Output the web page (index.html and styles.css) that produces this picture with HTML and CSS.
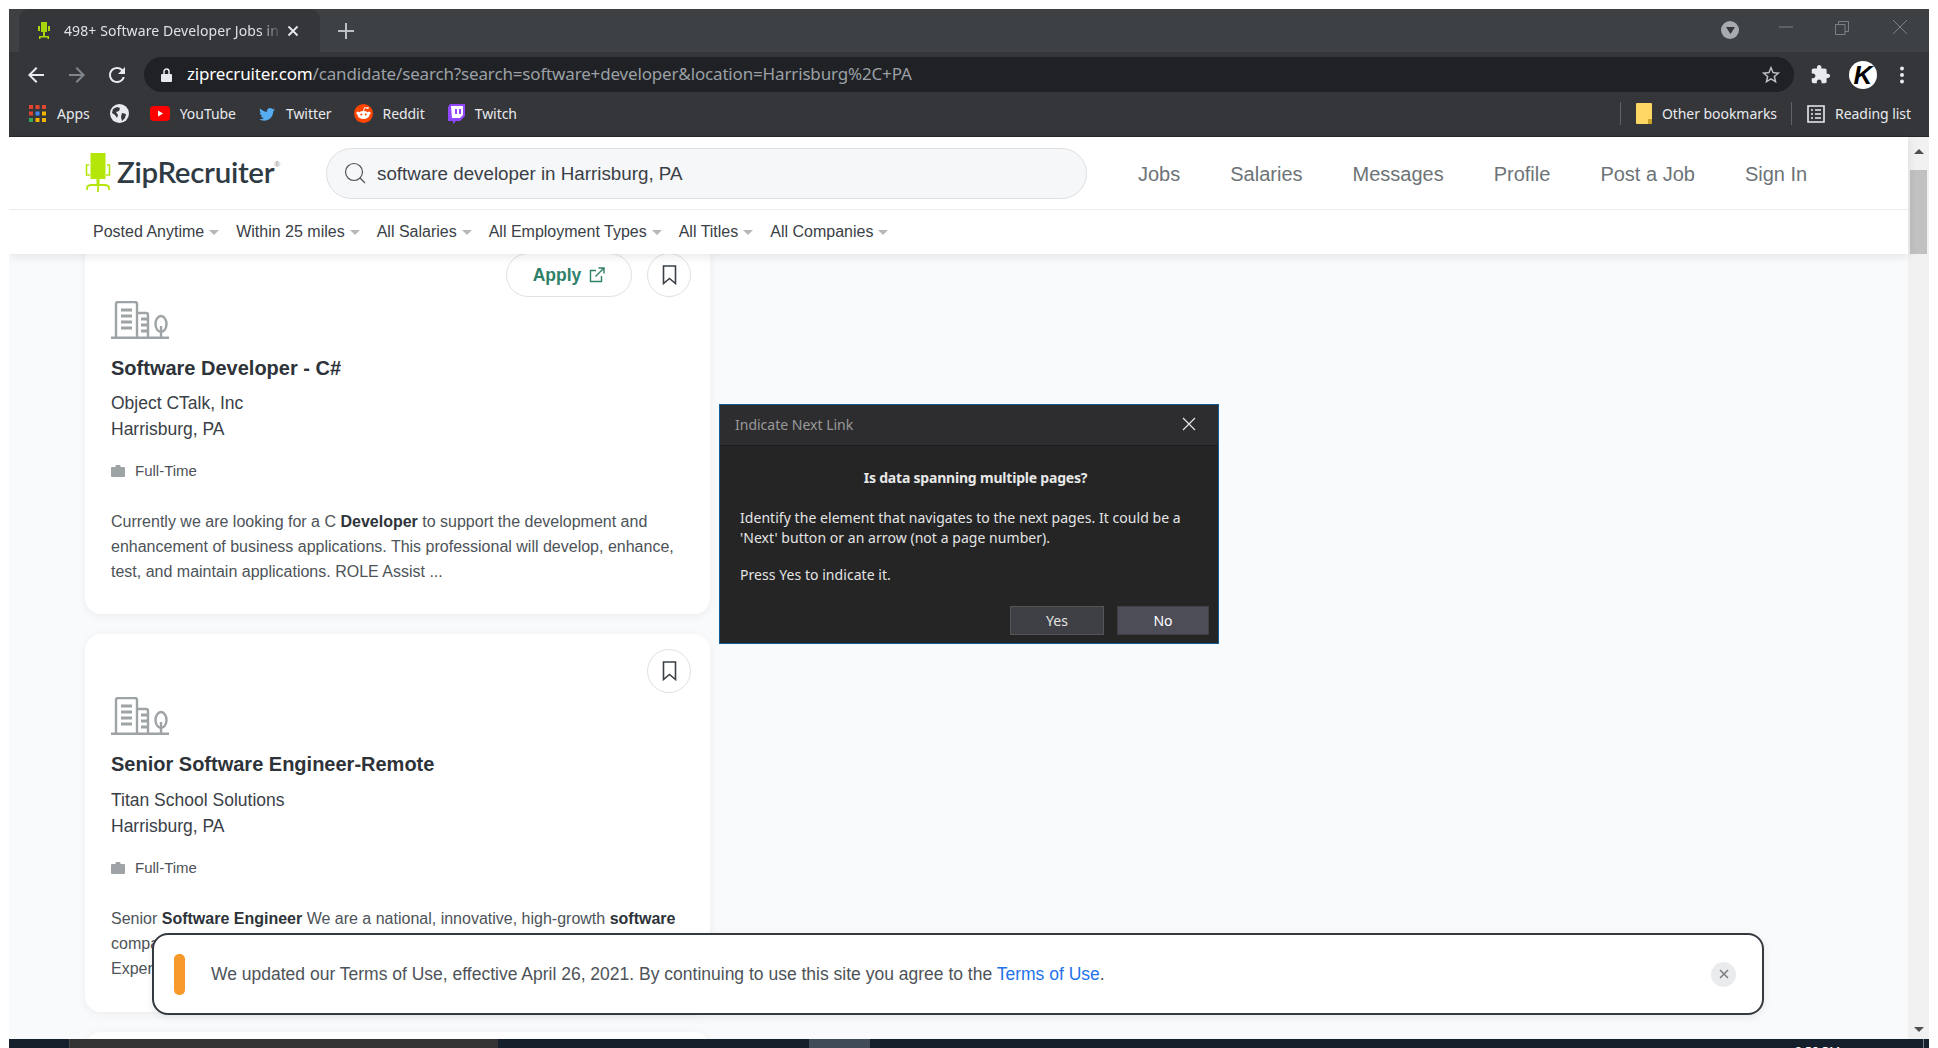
FILE: index.html
```html
<!DOCTYPE html>
<html lang="en">
<head>
    <meta charset="UTF-8">
    <meta name="viewport" content="width=device-width, initial-scale=1.0">
    <title>498+ Software Developer Jobs in Harrisburg, PA</title>
    <link rel="stylesheet" href="styles.css">
</head>
<body>
<div class="window">

    <div class="tabbar">
        <div class="tab">
            <svg class="tab-favicon" width="14" height="20" viewBox="0 0 14 20"><path d="M4 1h6v10H4zM1 5h2v5H1zM11 5h2v5h-2zM6 11h2v4H6zM2 15h10v1.500H2zM2 16h1.500v2H2zM10.500 16H12v2h-1.500z" fill="#a8d40c"/></svg>
            <span class="tab-title">498+ Software Developer Jobs in</span>
            <svg class="tab-close" width="12" height="12" viewBox="0 0 12 12"><path d="M1.500 1.500l9 9M10.500 1.500l-9 9" stroke="#e8eaed" stroke-width="1.800"/></svg>
        </div>
        <svg class="tab-new" width="16" height="16" viewBox="0 0 16 16"><path d="M8 0v16M0 8h16" stroke="#bdc1c6" stroke-width="2"/></svg>
        <div class="window-controls">
            <span class="tab-search"><svg width="9" height="7" viewBox="0 0 9 7"><path d="M0 0h9L4.500 7z" fill="#35363a"/></svg></span>
            <svg class="ctl ctl-min" width="14" height="2" viewBox="0 0 14 2"><path d="M0 1h14" stroke="#7d8184"/></svg>
            <svg class="ctl ctl-max" width="14" height="14" viewBox="0 0 14 14"><path d="M.5 3.500h9.500v10H.5zM3.500 3.500V.5h10v10H10" fill="none" stroke="#7d8184"/></svg>
            <svg class="ctl ctl-close" width="14" height="14" viewBox="0 0 14 14"><path d="M0 0l14 14M14 0L0 14" stroke="#7d8184"/></svg>
        </div>
    </div>

    <div class="toolbar">
        <svg class="nav-btn" width="24" height="24" viewBox="0 0 24 24"><path fill="#e8eaed" d="M20 11H7.830l5.590-5.590L12 4l-8 8 8 8 1.410-1.410L7.830 13H20v-2z"/></svg>
        <svg class="nav-btn" width="24" height="24" viewBox="0 0 24 24"><path fill="#80868b" d="M4 11h12.170l-5.590-5.590L12 4l8 8-8 8-1.410-1.410L16.170 13H4v-2z"/></svg>
        <svg class="nav-btn" width="24" height="24" viewBox="0 0 24 24"><path fill="#e8eaed" d="M17.650 6.350A7.958 7.958 0 0 0 12 4c-4.420 0-7.990 3.580-7.990 8s3.570 8 7.990 8c3.730 0 6.840-2.550 7.730-6h-2.080A5.990 5.990 0 0 1 12 18c-3.310 0-6-2.690-6-6s2.690-6 6-6c1.660 0 3.140.69 4.220 1.780L13 11h7V4l-2.350 2.350z"/></svg>
        <div class="omnibox">
            <svg class="lock" width="11" height="14" viewBox="0 0 11 14"><path fill="#e8eaed" d="M1 6h9a1 1 0 0 1 1 1v6a1 1 0 0 1-1 1H1a1 1 0 0 1-1-1V7a1 1 0 0 1 1-1z"/><path fill="none" stroke="#e8eaed" stroke-width="1.500" d="M3 6V3.500a2.500 2.500 0 0 1 5 0V6"/></svg>
            <span class="url"><span class="url-host">ziprecruiter.com</span>/candidate/search?search=software+developer&amp;location=Harrisburg%2C+PA</span>
            <svg class="star" width="22" height="22" viewBox="0 0 24 24"><path fill="#bdc1c6" d="M22 9.240l-7.190-.62L12 2 9.190 8.630 2 9.240l5.460 4.730L5.820 21 12 17.270 18.180 21l-1.630-7.030L22 9.240zM12 15.400l-3.760 2.270 1-4.280-3.320-2.880 4.380-.38L12 6.100l1.710 4.040 4.380.38-3.320 2.880 1 4.280L12 15.400z"/></svg>
        </div>
        <svg class="puzzle" width="21" height="21" viewBox="0 0 24 24"><path fill="#e8eaed" d="M20.500 11H19V7c0-1.100-.9-2-2-2h-4V3.500C13 2.120 11.880 1 10.500 1S8 2.120 8 3.500V5H4c-1.100 0-1.990.9-1.990 2v3.800H3.500c1.490 0 2.700 1.210 2.700 2.700s-1.210 2.700-2.700 2.700H2V20c0 1.100.9 2 2 2h3.800v-1.500c0-1.490 1.210-2.700 2.700-2.700 1.490 0 2.700 1.210 2.700 2.700V22H17c1.100 0 2-.9 2-2v-4h1.500c1.380 0 2.500-1.120 2.500-2.500S21.880 11 20.500 11z"/></svg>
        <div class="avatar">K</div>
        <svg class="menu-dots" width="4" height="18" viewBox="0 0 4 18"><circle cx="2" cy="2.500" r="2" fill="#e8eaed"/><circle cx="2" cy="9" r="2" fill="#e8eaed"/><circle cx="2" cy="15.500" r="2" fill="#e8eaed"/></svg>
    </div>

    <div class="bookmarks">
        <a class="bm bm-apps">
            <svg width="17" height="17" viewBox="0 0 17 17">
                <path fill="#e0452f" d="M0 0h4v4H0zM6.500 0h4v4h-4zM13 0h4v4h-4z"/>
                <path fill="#3f86ee" d="M6.500 6.500h4v4h-4z"/><path fill="#e0452f" d="M0 6.500h4v4H0z"/><path fill="#f4b400" d="M13 6.500h4v4h-4z"/>
                <path fill="#34a853" d="M0 13h4v4H0z"/><path fill="#f4b400" d="M6.500 13h4v4h-4zM13 13h4v4h-4z"/>
            </svg>
            Apps
        </a>
        <svg class="bm-globe" width="19" height="19" viewBox="0 0 19 19"><circle cx="9.500" cy="9.500" r="9.500" fill="#e8eaed"/><path fill="#35363a" d="M3 5l4-2 3 1-1 3-3 1 2 3-1 3-2-3-3-2zM12 9l4 1-1 4-3 3-1-4z"/></svg>
        <a class="bm">
            <svg width="20" height="15" viewBox="0 0 20 15"><rect width="20" height="15" rx="4" fill="#f00"/><path d="M8 4.500l5 3-5 3z" fill="#fff"/></svg>
            YouTube
        </a>
        <a class="bm">
            <svg width="18" height="18" viewBox="0 0 24 24"><path fill="#55acee" d="M22.460 6c-.77.35-1.600.58-2.460.69.88-.53 1.560-1.370 1.880-2.380-.83.5-1.750.85-2.720 1.050C18.370 4.500 17.260 4 16 4c-2.350 0-4.270 1.920-4.270 4.290 0 .34.04.67.11.98C8.280 9.090 5.110 7.380 3 4.790c-.37.63-.58 1.370-.58 2.150 0 1.490.75 2.810 1.910 3.560-.71 0-1.370-.2-1.950-.5v.03c0 2.080 1.480 3.820 3.440 4.210a4.220 4.220 0 0 1-1.930.07 4.280 4.280 0 0 0 4 2.980 8.521 8.521 0 0 1-5.330 1.840c-.34 0-.68-.02-1.020-.06C3.440 20.290 5.700 21 8.120 21 16 21 20.330 14.460 20.330 8.790c0-.19 0-.37-.01-.56.84-.6 1.560-1.360 2.140-2.230z"/></svg>
            Twitter
        </a>
        <a class="bm">
            <svg width="19" height="19" viewBox="0 0 19 19"><circle cx="9.500" cy="9.500" r="9.500" fill="#ff4500"/><ellipse cx="9.500" cy="11" rx="6" ry="4" fill="#fff"/><circle cx="3.800" cy="9" r="1.500" fill="#fff"/><circle cx="15.200" cy="9" r="1.500" fill="#fff"/><circle cx="7.300" cy="10.500" r="1" fill="#ff4500"/><circle cx="11.700" cy="10.500" r="1" fill="#ff4500"/><path d="M9.500 7l1-3.500 3 .7" fill="none" stroke="#fff"/><circle cx="13.800" cy="4" r="1.100" fill="#fff"/></svg>
            Reddit
        </a>
        <a class="bm">
            <svg width="18" height="20" viewBox="0 0 18 20"><path fill="#9146ff" d="M3 0h15v12l-5 5H9l-3 3v-3H1V3z"/><path fill="#fff" d="M4 2h12v9l-3 3H5z"/><path fill="#9146ff" d="M8 5h2v5H8zM12 5h2v5h-2z"/></svg>
            Twitch
        </a>
        <div class="bm-right">
            <span class="bm-sep"></span>
            <a class="bm">
                <svg width="16" height="21" viewBox="0 0 16 21"><path fill="#fdd663" d="M1 0h14a1 1 0 0 1 1 1v19a1 1 0 0 1-1 1H1a1 1 0 0 1-1-1V1a1 1 0 0 1 1-1z"/><path fill="#c9a227" d="M12 16h4v4a1 1 0 0 1-1 1h-3z"/></svg>
                Other bookmarks
            </a>
            <span class="bm-sep"></span>
            <a class="bm">
                <svg width="18" height="18" viewBox="0 0 18 18"><path fill="none" stroke="#e8eaed" stroke-width="1.600" d="M1 1h16v16H1z"/><path stroke="#e8eaed" stroke-width="1.600" d="M4 5h2M8 5h6M4 9h2M8 9h6M4 13h2M8 13h6"/></svg>
                Reading list
            </a>
        </div>
    </div>

    <div class="page">
        <div class="page-main">
            <header class="site-header">
                <div class="site-top">
                    <a class="logo">
                        <svg width="26" height="40" viewBox="0 0 26 40">
                            <path fill="#b5e60a" d="M5.500 0h15v26h-15z"/>
                            <path fill="none" stroke="#b5e60a" stroke-width="1.600" d="M4 12H1.500v10H5M22 12h2.500v10H21"/>
                            <path fill="#b5e60a" d="M11.500 26h3v6h-3z"/>
                            <path fill="none" stroke="#b5e60a" stroke-width="1.800" d="M2 37v-2q0-3 5-3h12q5 0 5 3v2M13 32v7"/>
                        </svg>
                        <span class="logo-text">ZipRecruiter</span><span class="logo-reg">®</span>
                    </a>
                    <div class="site-search">
                        <svg width="22" height="22" viewBox="0 0 22 22"><circle cx="10" cy="10" r="8.500" fill="none" stroke="#4d5358" stroke-width="1.200"/><path d="M16 16l5 5" stroke="#4d5358" stroke-width="1.200"/></svg>
                        <span class="search-text">software developer in Harrisburg, PA</span>
                    </div>
                    <nav class="site-nav">
                        <a>Jobs</a>
                        <a>Salaries</a>
                        <a>Messages</a>
                        <a>Profile</a>
                        <a>Post a Job</a>
                        <a>Sign In</a>
                    </nav>
                </div>
                <div class="filters">
                    <span class="filter">Posted Anytime</span>
                    <span class="filter">Within 25 miles</span>
                    <span class="filter">All Salaries</span>
                    <span class="filter">All Employment Types</span>
                    <span class="filter">All Titles</span>
                    <span class="filter">All Companies</span>
                </div>
            </header>

            <div class="results">
                <div class="job-list">
                    <article class="job-card job-card-first">
                        <div class="job-actions">
                            <a class="apply-btn">Apply
                                <svg width="16" height="16" viewBox="0 0 16 16"><path fill="none" stroke="#2f8069" stroke-width="1.400" d="M12.500 9v5.500h-11v-11H7M6.500 9.500L14.500 1.500M9.500 1h5.500v5.500"/></svg>
                            </a>
                            <a class="save-btn"><svg width="15" height="20" viewBox="0 0 15 20"><path fill="none" stroke="#3a4046" stroke-width="1.600" d="M1.500 1h12v17.500l-6-5-6 5z"/></svg></a>
                        </div>
                        <svg class="company-icon" width="58" height="38" viewBox="0 0 58 38"><g fill="none" stroke="#9ea3a6" stroke-width="2.400"><path d="M5 37V3a2 2 0 0 1 2-2h17a2 2 0 0 1 2 2v34M26 12h9a2 2 0 0 1 2 2v23"/><path d="M10 9h11M10 15h11M10 21h11M10 27h11M30 18h7M30 24h7M30 30h7" stroke-width="2.800"/><ellipse cx="50" cy="23" rx="5.500" ry="8"/><path d="M50 25v12"/></g><path d="M0 35.500h58V38H0z" fill="#9ea3a6"/></svg>
                        <h2 class="job-title">Software Developer - C#</h2>
                        <div class="job-company">Object CTalk, Inc</div>
                        <div class="job-company">Harrisburg, PA</div>
                        <div class="job-type">
                            <svg width="14" height="12" viewBox="0 0 14 12"><path fill="#9ea3a6" d="M1 2h3.500V1a1 1 0 0 1 1-1h3a1 1 0 0 1 1 1v1H13a1 1 0 0 1 1 1v8a1 1 0 0 1-1 1H1a1 1 0 0 1-1-1V3a1 1 0 0 1 1-1z"/></svg>
                            Full-Time
                        </div>
                        <p class="job-desc">Currently we are looking for a C <b>Developer</b> to support the development and enhancement of business applications. This professional will develop, enhance, test, and maintain applications. ROLE Assist ...</p>
                    </article>

                    <article class="job-card">
                        <div class="job-actions">
                            <a class="save-btn"><svg width="15" height="20" viewBox="0 0 15 20"><path fill="none" stroke="#3a4046" stroke-width="1.600" d="M1.500 1h12v17.500l-6-5-6 5z"/></svg></a>
                        </div>
                        <svg class="company-icon" width="58" height="38" viewBox="0 0 58 38"><g fill="none" stroke="#9ea3a6" stroke-width="2.400"><path d="M5 37V3a2 2 0 0 1 2-2h17a2 2 0 0 1 2 2v34M26 12h9a2 2 0 0 1 2 2v23"/><path d="M10 9h11M10 15h11M10 21h11M10 27h11M30 18h7M30 24h7M30 30h7" stroke-width="2.800"/><ellipse cx="50" cy="23" rx="5.500" ry="8"/><path d="M50 25v12"/></g><path d="M0 35.500h58V38H0z" fill="#9ea3a6"/></svg>
                        <h2 class="job-title">Senior Software Engineer-Remote</h2>
                        <div class="job-company">Titan School Solutions</div>
                        <div class="job-company">Harrisburg, PA</div>
                        <div class="job-type">
                            <svg width="14" height="12" viewBox="0 0 14 12"><path fill="#9ea3a6" d="M1 2h3.500V1a1 1 0 0 1 1-1h3a1 1 0 0 1 1 1v1H13a1 1 0 0 1 1 1v8a1 1 0 0 1-1 1H1a1 1 0 0 1-1-1V3a1 1 0 0 1 1-1z"/></svg>
                            Full-Time
                        </div>
                        <p class="job-desc">Senior <b>Software Engineer</b> We are a national, innovative, high-growth <b>software</b><br>company<br>Experience</p>
                    </article>

                    <article class="job-card"></article>
                </div>

                <div class="terms-notice">
                    <span class="terms-mark"></span>
                    <span class="terms-text">We updated our Terms of Use, effective April 26, 2021. By continuing to use this site you agree to the <a>Terms of Use</a>.</span>
                    <span class="terms-close"><svg width="10" height="10" viewBox="0 0 10 10"><path d="M1 1l8 8M9 1L1 9" stroke="#777c80" stroke-width="1.500"/></svg></span>
                </div>
            </div>
        </div>

        <div class="scrollbar">
            <span class="arrow-up"></span>
            <span class="thumb"></span>
            <span class="arrow-down"></span>
        </div>
    </div>

    <div class="taskbar">
        <span class="task task-start"></span>
        <span class="task task-active"></span>
        <span class="task task-gap"></span>
        <span class="task task-light"></span>
        <span class="task task-fill"></span>
        <span class="task-clock">2:58 PM</span>
        <span class="task-edge"></span>
    </div>

    <div class="dialog">
        <div class="dialog-title">
            <span>Indicate Next Link</span>
            <svg width="14" height="14" viewBox="0 0 14 14"><path d="M1 1l12 12M13 1L1 13" stroke="#e6e6e6" stroke-width="1.200"/></svg>
        </div>
        <div class="dialog-body">
            <h3>Is data spanning multiple pages?</h3>
            <p>Identify the element that navigates to the next pages. It could be a 'Next' button or an arrow (not a page number).</p>
            <p>Press Yes to indicate it.</p>
        </div>
        <div class="dialog-buttons">
            <a class="dlg-btn dlg-yes">Yes</a>
            <a class="dlg-btn dlg-no">No</a>
        </div>
    </div>

</div>
</body>
</html>
```

FILE: styles.css
```css
* {
    box-sizing: border-box;
}
body {
    margin: 0;
    height: 1048px;
    padding: 9px 9px 0;
    background: #fff;
    overflow: hidden;
    font-family: "Liberation Sans", Arial, sans-serif;
}
.window {
    position: relative;
    width: 1920px;
    height: 1039px;
    display: flex;
    flex-direction: column;
    overflow: hidden;
}

/* browser chrome */
.tabbar {
    height: 43px;
    background: #3e4144;
    display: flex;
    align-items: flex-start;
    padding-left: 10px;
    color: #e8eaed;
    font-family: "Noto Sans", Arial, sans-serif;
}
.tab {
    width: 301px;
    height: 43px;
    margin-top: 0;
    background: #35363a;
    border-radius: 10px 10px 0 0;
    display: flex;
    align-items: center;
    padding-left: 18px;
}
.tab-favicon {
    flex: none;
}
.tab-title {
    width: 218px;
    margin-left: 13px;
    font-size: 14px;
    letter-spacing: 0.1px;
    white-space: nowrap;
    overflow: hidden;
    color: #dfe1e5;
    -webkit-mask-image: linear-gradient(to right, #000 90%, transparent);
    mask-image: linear-gradient(to right, #000 90%, transparent);
}
.tab-close {
    margin-left: 5px;
}
.tab-new {
    margin: 14px 0 0 18px;
}
.window-controls {
    margin-left: auto;
    display: flex;
    align-items: center;
    height: 36px;
    position: relative;
    width: 240px;
}
.tab-search {
    position: absolute;
    left: 32px;
    top: 12px;
    width: 18px;
    height: 18px;
    border-radius: 50%;
    background: #a8abad;
    display: flex;
    align-items: center;
    justify-content: center;
}
.ctl {
    position: absolute;
}
.ctl-min {
    left: 90px;
    top: 17px;
}
.ctl-max {
    left: 146px;
    top: 12px;
}
.ctl-close {
    left: 204px;
    top: 11px;
}
.toolbar {
    height: 45px;
    background: #35363a;
    display: flex;
    align-items: center;
    padding-left: 15px;
}
.nav-btn {
    flex: none;
    margin-right: 17px;
}
.nav-btn:nth-child(2) {
    margin-right: 16px;
}
.nav-btn:nth-child(3) {
    margin-right: 15px;
}
.omnibox {
    width: 1650px;
    height: 35px;
    border-radius: 18px;
    background: #202124;
    display: flex;
    align-items: center;
    padding-left: 17px;
    font-family: "Noto Sans", Arial, sans-serif;
}
.lock {
    flex: none;
}
.url {
    margin-left: 15px;
    padding-bottom: 2px;
    font-size: 17px;
    letter-spacing: -0.16px;
    color: #9aa0a6;
    white-space: nowrap;
}
.url-host {
    color: #fff;
}
.star {
    margin-left: auto;
    margin-right: 12px;
}
.puzzle {
    margin-left: 16px;
    flex: none;
}
.avatar {
    flex: none;
    width: 28px;
    height: 28px;
    margin-left: 18px;
    border-radius: 50%;
    background: #fff;
    color: #000;
    text-align: center;
    font: italic 700 26px/28px "Liberation Sans", Arial, sans-serif;
}
.menu-dots {
    flex: none;
    margin-left: 23px;
}
.bookmarks {
    height: 40px;
    background: #35363a;
    border-bottom: 1px solid #26272a;
    display: flex;
    align-items: center;
    padding: 0 0 6px 20px;
    font-family: "Noto Sans", Arial, sans-serif;
    font-size: 14px;
    letter-spacing: -0.05px;
    color: #e8eaed;
}
.bm {
    display: flex;
    align-items: center;
    gap: 10px;
    margin-right: 22px;
    white-space: nowrap;
}
.bm-apps {
    gap: 11px;
    margin-right: 20px;
}
.bm-globe {
    flex: none;
    margin-right: 21px;
}
.bm-right {
    margin-left: auto;
    display: flex;
    align-items: center;
}
.bm-right .bm {
    margin: 0 14px 0 15px;
}
.bm-sep {
    width: 1px;
    height: 23px;
    background: #5f6368;
}
.bm-right .bm:last-child {
    margin-right: 18px;
}

/* zip site */
.page {
    flex: 1;
    min-height: 0;
    display: flex;
    background: #f9fafc;
}
.page-main {
    flex: 1;
    min-width: 0;
    display: flex;
    flex-direction: column;
}
.site-header {
    position: relative;
    z-index: 2;
    background: #fff;
    box-shadow: 0 2px 10px rgba(0,0,0,0.1);
}
.site-top {
    height: 73px;
    border-bottom: 1px solid #ebecee;
    display: flex;
    align-items: center;
    padding-left: 76px;
}
.logo {
    width: 241px;
    flex: none;
    display: flex;
    align-items: flex-start;
    color: #2f3b43;
}
.logo-text {
    margin-left: 6px;
    font: 600 29.5px/40px Lato, Arial, sans-serif;
    letter-spacing: -0.3px;
    transform: translateY(-1px);
}
.logo-reg {
    font-size: 8px;
    line-height: 24px;
    color: #888;
}
.site-search {
    width: 761px;
    height: 51px;
    flex: none;
    border: 1px solid #dcdfe2;
    border-radius: 26px;
    background: #f6f7f9;
    display: flex;
    align-items: center;
    gap: 11px;
    padding-left: 17px;
    font-size: 18.8px;
    color: #3a4046;
}
.search-text {
    padding-top: 2px;
}
.site-nav {
    display: flex;
    gap: 50px;
    margin-left: 51px;
    padding-top: 2px;
    font-size: 20px;
    color: #6d7377;
}
.filters {
    height: 44px;
    display: flex;
    align-items: center;
    gap: 17px;
    padding-left: 84px;
    font-size: 16px;
    color: #3a4046;
}
.filter {
    display: flex;
    align-items: center;
    gap: 5px;
}
.filter::after {
    content: "";
    border: 5px solid transparent;
    border-top-color: #b5b8bb;
    border-bottom: 0;
}

.results {
    flex: 1;
    min-height: 0;
    position: relative;
    overflow: hidden;
}
.job-list {
    display: flex;
    flex-direction: column;
    gap: 20px;
    width: 625px;
    margin: -16px 0 0 76px;
}
.job-card {
    background: #fff;
    border-radius: 16px;
    box-shadow: 0 2px 10px rgba(0,0,0,0.06);
    padding: 15px 19px 0 26px;
    height: 378px;
    flex: none;
    color: #3a4046;
}
.job-card-first {
    height: 376px;
}
.job-card-first .job-title {
    margin-bottom: 8.5px;
}
.job-actions {
    display: flex;
    justify-content: flex-end;
    gap: 15px;
    height: 44px;
}
.apply-btn {
    width: 126px;
    height: 44px;
    border: 1px solid #dfe1e3;
    border-radius: 22px;
    background: #fff;
    display: flex;
    align-items: center;
    justify-content: center;
    gap: 8px;
    font-size: 17.5px;
    font-weight: 700;
    color: #2f8069;
}
.save-btn {
    width: 44px;
    height: 44px;
    border: 1px solid #dfe1e3;
    border-radius: 50%;
    background: #fff;
    display: flex;
    align-items: center;
    justify-content: center;
}
.company-icon {
    display: block;
    margin-top: 4px;
}
.job-title {
    margin: 16px 0 9.5px;
    font-size: 20px;
    line-height: 26px;
    font-weight: 700;
    color: #2d3339;
}
.job-company {
    font-size: 17.5px;
    line-height: 26px;
}
.job-type {
    display: flex;
    align-items: center;
    gap: 10px;
    margin-top: 16px;
    font-size: 15px;
    line-height: 26px;
    color: #4d5358;
}
.job-desc {
    margin: 25px 0 0;
    font-size: 16px;
    line-height: 25px;
    color: #4d5358;
}
.job-desc b {
    color: #2d3339;
}

.terms-notice {
    position: absolute;
    left: 143px;
    bottom: 24px;
    width: 1612px;
    height: 82px;
    z-index: 1;
    border: 2px solid #353a40;
    border-radius: 16px;
    background: #fff;
    box-shadow: 0 2px 8px rgba(0,0,0,0.08);
    display: flex;
    align-items: center;
    padding-left: 20px;
    font-size: 17.5px;
    color: #4d5358;
}
.terms-mark {
    width: 11px;
    height: 41px;
    border-radius: 5px;
    background: #f7982a;
}
.terms-text {
    margin-left: 26px;
}
.terms-text a {
    color: #1f73e8;
}
.terms-close {
    margin-left: auto;
    margin-right: 26px;
    width: 25px;
    height: 25px;
    border-radius: 50%;
    background: #e9ebec;
    display: flex;
    align-items: center;
    justify-content: center;
}

.scrollbar {
    width: 21px;
    flex: none;
    background: #f1f1f1;
    display: flex;
    flex-direction: column;
    align-items: center;
    padding-top: 12px;
}
.arrow-up {
    border: 5px solid transparent;
    border-top: 0;
    border-bottom-color: #505050;
}
.thumb {
    width: 17px;
    height: 84px;
    margin-top: 16px;
    background: #c1c1c1;
}
.arrow-down {
    margin-top: auto;
    margin-bottom: 7px;
    border: 5px solid transparent;
    border-bottom: 0;
    border-top-color: #505050;
}

.taskbar {
    position: relative;
    height: 9px;
    flex: none;
    display: flex;
    background: #16202c;
    overflow: hidden;
}
.task-start {
    width: 60px;
}
.task-active {
    width: 429px;
    background: #333;
    border-left: 1px solid #4a4a4a;
}
.task-gap {
    width: 311px;
}
.task-light {
    width: 61px;
    background: #414c59;
}
.task-clock {
    position: absolute;
    left: 1786px;
    top: 6px;
    font: 12px/14px "Noto Sans", Arial, sans-serif;
    color: #fff;
}
.task-edge {
    position: absolute;
    left: 1914px;
    top: 0;
    width: 1px;
    height: 9px;
    background: #7b8088;
}

/* scraper popup */
.dialog {
    position: absolute;
    left: 710px;
    top: 395px;
    width: 500px;
    height: 240px;
    z-index: 5;
    background: #252526;
    border: 1px solid #0f5c96;
    font-family: "Noto Sans", Arial, sans-serif;
    font-size: 14px;
    color: #e4e4e4;
    display: flex;
    flex-direction: column;
}
.dialog-title {
    height: 41px;
    flex: none;
    background: #2d2d30;
    border-bottom: 1px solid #1e1e1e;
    display: flex;
    align-items: center;
    justify-content: space-between;
    padding: 0 22px 2px 15px;
    color: #999;
}
.dialog-body {
    padding: 22px 20px 0;
    letter-spacing: 0.05px;
    line-height: 20px;
}
.dialog-body h3 {
    margin: 0 0 20px;
    padding-left: 13px;
    text-align: center;
    font-size: 14px;
    line-height: 20px;
    font-weight: 700;
    letter-spacing: -0.2px;
    color: #e8e8e8;
}
.dialog-body p {
    margin: 0 0 17px;
}
.dialog-buttons {
    margin-top: auto;
    display: flex;
    justify-content: flex-end;
    gap: 13px;
    padding: 0 9px 8px 0;
}
.dlg-btn {
    height: 29px;
    width: 94px;
    display: flex;
    align-items: center;
    justify-content: center;
    background: #3f3f46;
    border: 1px solid #555;
}
.dlg-no {
    width: 92px;
    background: #4d4d57;
    border-color: #3f3f46;
    color: #fff;
}
```
